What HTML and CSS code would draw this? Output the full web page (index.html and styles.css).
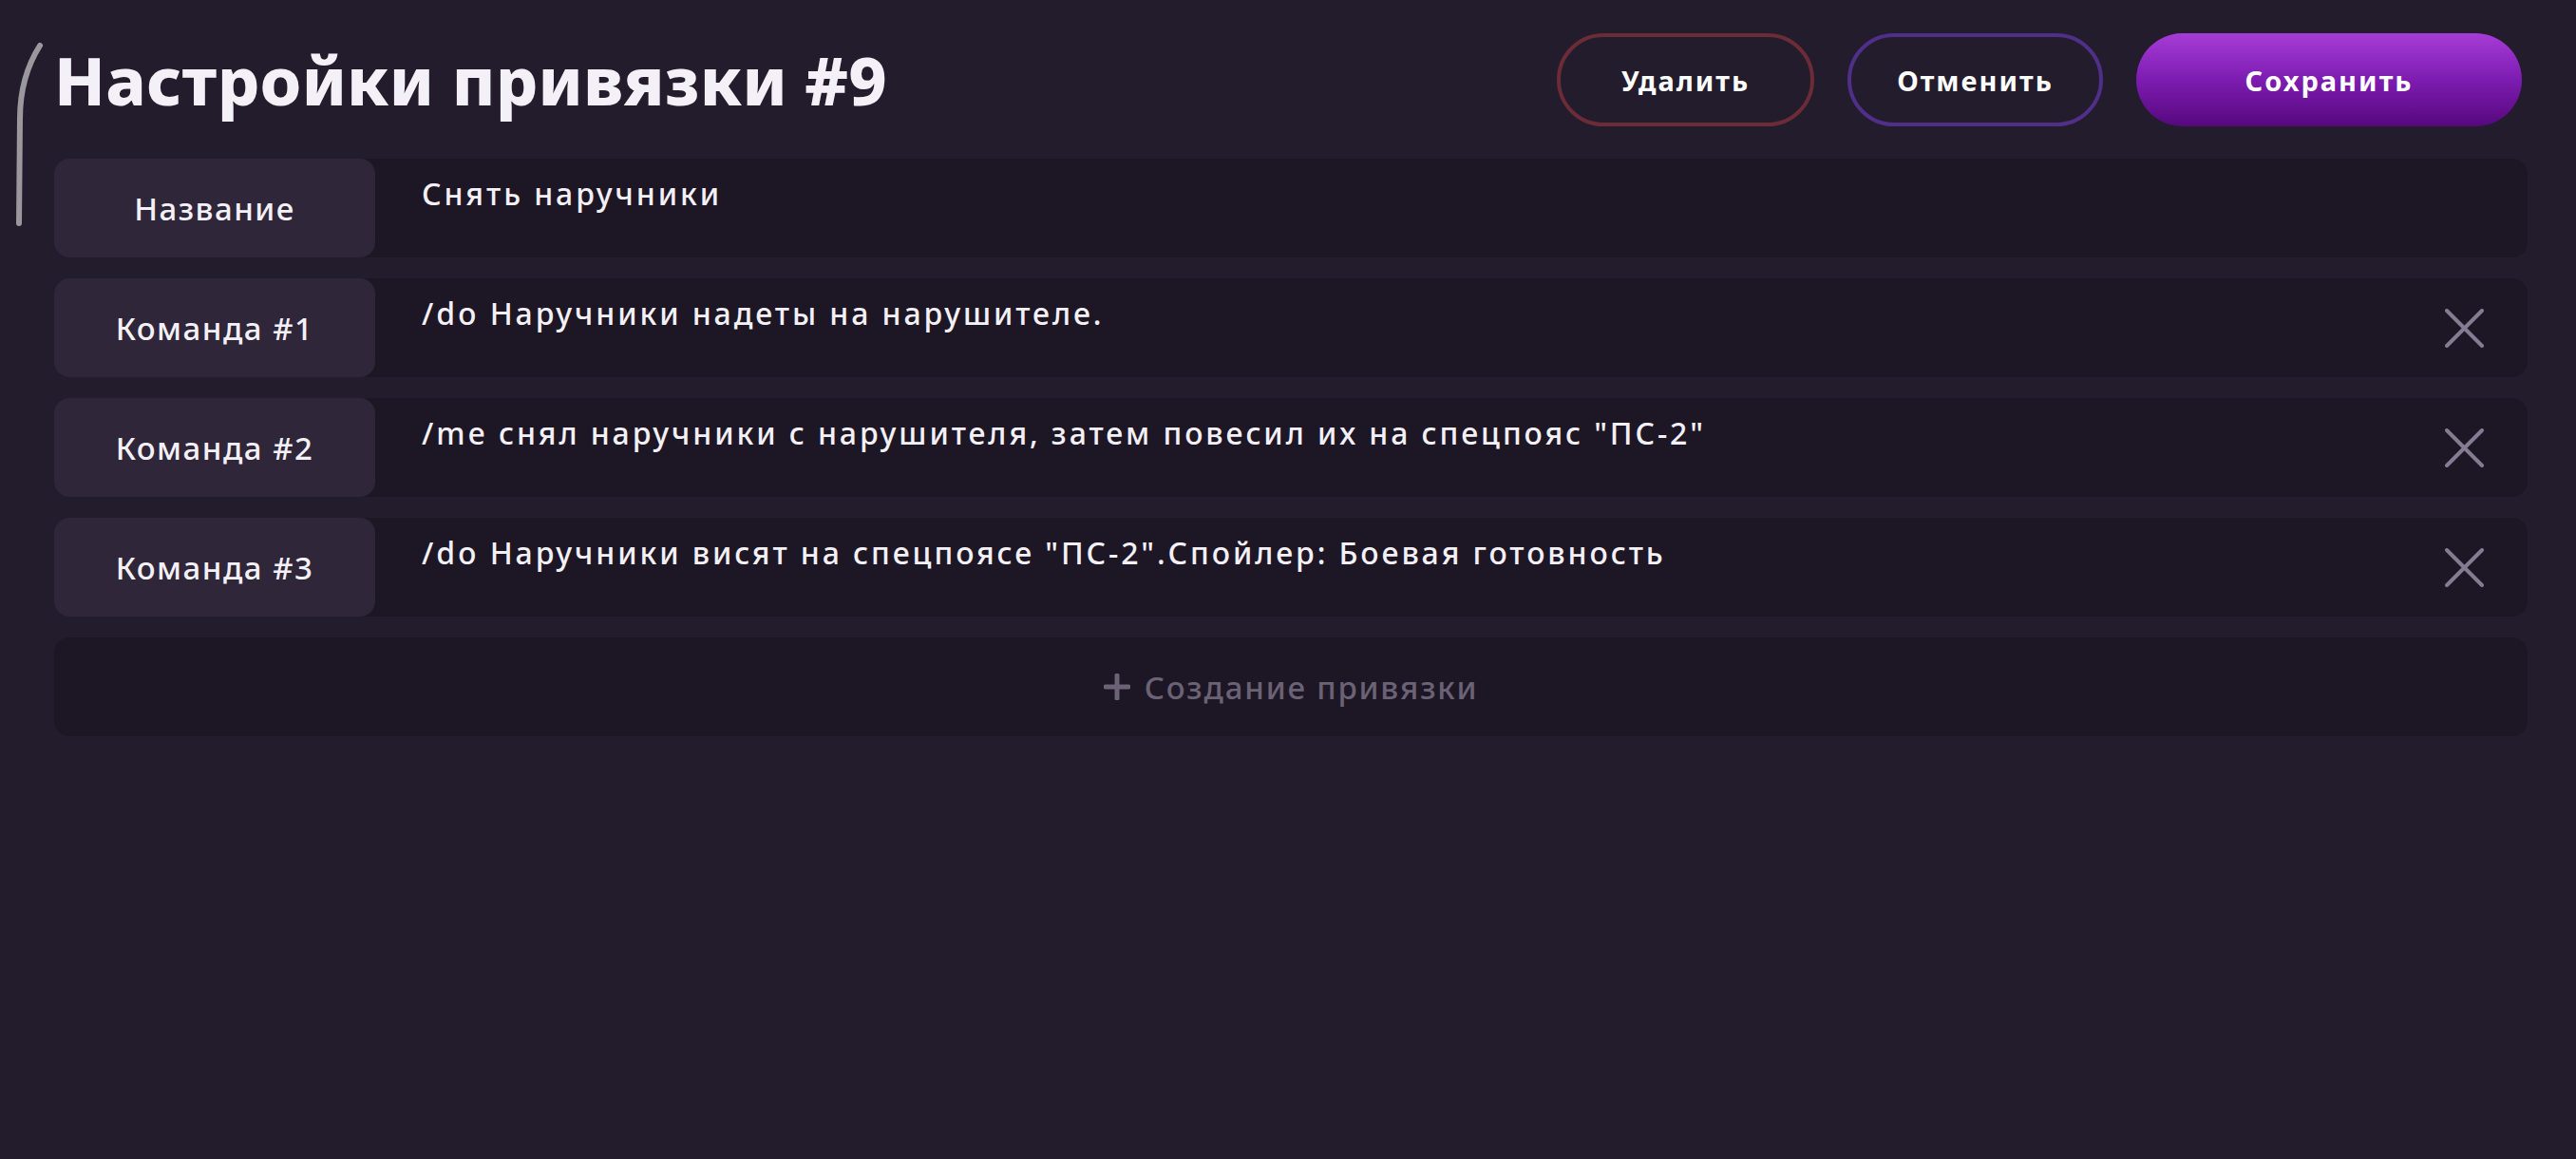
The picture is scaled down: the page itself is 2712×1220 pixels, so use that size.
FILE: index.html
```html
<!DOCTYPE html>
<html lang="ru">
<head>
<meta charset="utf-8">
<title>Настройки привязки #9</title>
<link rel="stylesheet" href="styles.css">
</head>
<body>
<div class="page">
  <svg class="scrollbar" width="60" height="200" viewBox="0 0 60 200">
    <path d="M42 48 C 28 70 21 95 21 125 L 20 235" transform="translate(0,-40)" fill="none" stroke="#9a979d" stroke-width="6" stroke-linecap="round"/>
  </svg>
  <header class="header">
    <h1 class="title">Настройки привязки #9</h1>
    <div class="actions">
      <button class="btn btn-delete">Удалить</button>
      <button class="btn btn-cancel">Отменить</button>
      <button class="btn btn-save">Сохранить</button>
    </div>
  </header>
  <div class="rows">
    <div class="row">
      <div class="label">Название</div>
      <div class="value">Снять наручники</div>
    </div>
    <div class="row">
      <div class="label">Команда #1</div>
      <div class="value">/do Наручники надеты на нарушителе.</div>
      <svg class="close" width="41" height="41" viewBox="0 0 41 41"><path d="M2 2 L39 39 M39 2 L2 39" stroke="#857b92" stroke-width="4" stroke-linecap="round"/></svg>
    </div>
    <div class="row">
      <div class="label">Команда #2</div>
      <div class="value">/me снял наручники с нарушителя, затем повесил их на спецпояс "ПС-2"</div>
      <svg class="close" width="41" height="41" viewBox="0 0 41 41"><path d="M2 2 L39 39 M39 2 L2 39" stroke="#857b92" stroke-width="4" stroke-linecap="round"/></svg>
    </div>
    <div class="row">
      <div class="label">Команда #3</div>
      <div class="value">/do Наручники висят на спецпоясе "ПС-2".Спойлер: Боевая готовность</div>
      <svg class="close" width="41" height="41" viewBox="0 0 41 41"><path d="M2 2 L39 39 M39 2 L2 39" stroke="#857b92" stroke-width="4" stroke-linecap="round"/></svg>
    </div>
    <div class="row create">
      <svg class="plus" width="28" height="28" viewBox="0 0 28 28"><path d="M14 2 L14 26 M2 14 L26 14" stroke="#6b6276" stroke-width="5" stroke-linecap="round"/></svg>
      <span>Создание привязки</span>
    </div>
  </div>
</div>
</body>
</html>
```
FILE: styles.css
```css
html, body {
  margin: 0;
  padding: 0;
  background: #231c2c;
  height: 100%;
}
body {
  font-family: "Noto Sans", "DejaVu Sans", sans-serif;
  color: #f4f0f7;
}
.page {
  position: relative;
  padding: 35px 51px 0 57px;
}
.scrollbar {
  position: absolute;
  left: 0;
  top: 40px;
}
.header {
  display: flex;
  align-items: center;
  justify-content: space-between;
  padding-right: 6px;
  height: 98px;
}
.title {
  margin: 0;
  font-size: 70px;
  font-weight: 800;
  line-height: 1;
  letter-spacing: 0.3px;
}
.actions {
  display: flex;
  gap: 35px;
}
.btn {
  height: 98px;
  border-radius: 49px;
  font-family: "Noto Sans", sans-serif;
  font-size: 29px;
  font-weight: 700;
  color: #ffffff;
  background: transparent;
  border: 4px solid transparent;
  letter-spacing: 2px;
  padding: 0;
}
.btn-delete {
  width: 271px;
  border-color: #6b2b37;
}
.btn-cancel {
  width: 269px;
  border-color: #4f2f88;
}
.btn-save {
  width: 406px;
  border: none;
  background: linear-gradient(180deg, #a63cd8 0%, #7d1cb0 50%, #56087e 100%);
}
.rows {
  margin-top: 34px;
  display: flex;
  flex-direction: column;
  gap: 22px;
}
.row {
  height: 104px;
  display: flex;
  align-items: stretch;
  background: #1d1725;
  border-radius: 16px;
}
.label {
  width: 338px;
  flex: none;
  display: flex;
  align-items: center;
  justify-content: center;
  background: #2f2639;
  border-radius: 16px;
  font-size: 33px;
  font-weight: 500;
  letter-spacing: 1.5px;
}
.value {
  flex: 1;
  padding: 16px 0 0 49px;
  font-size: 32px;
  font-weight: 500;
  letter-spacing: 2.9px;
  line-height: 1.3;
}
.close {
  align-self: center;
  margin-right: 46px;
  flex: none;
}
.create {
  align-items: center;
  justify-content: center;
  gap: 15px;
  font-size: 33px;
  font-weight: 500;
  letter-spacing: 1.8px;
  color: #6b6276;
}
.plus {
  flex: none;
}
```
